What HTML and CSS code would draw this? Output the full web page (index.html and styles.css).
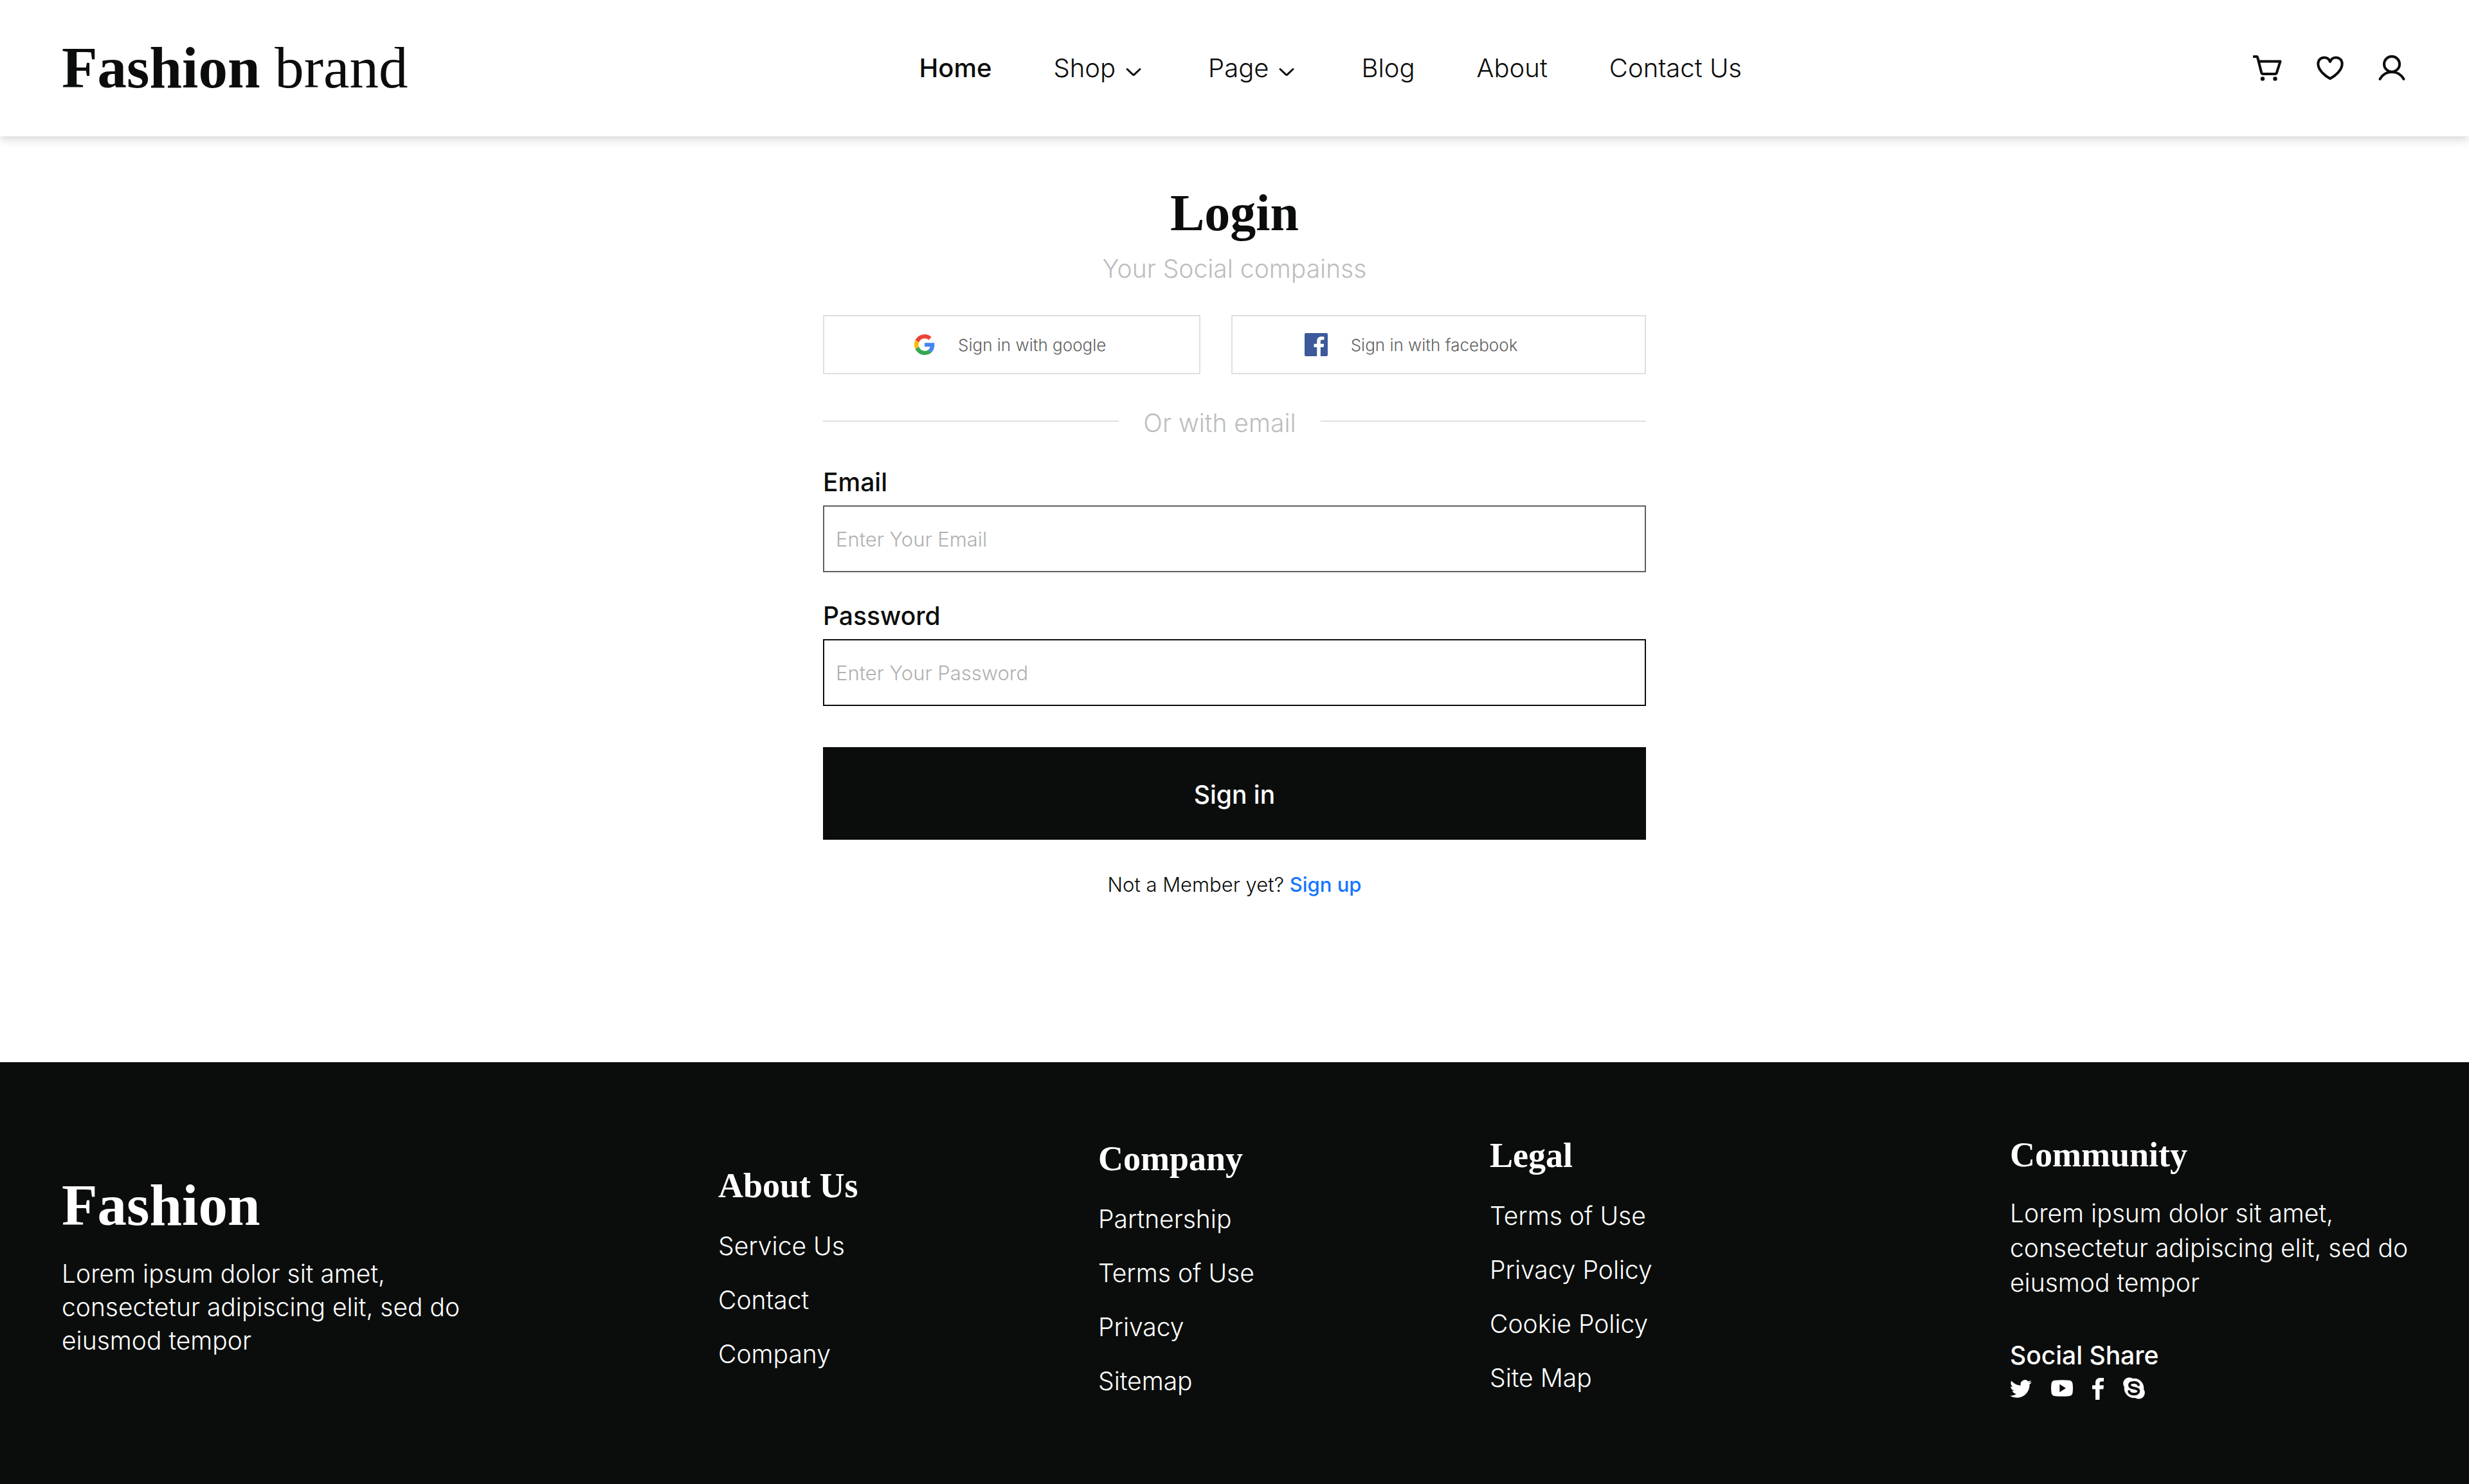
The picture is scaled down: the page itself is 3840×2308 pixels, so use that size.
FILE: index.html
```html
<!DOCTYPE html>
<html lang="en">
<head>
<meta charset="utf-8">
<meta name="viewport" content="width=device-width, initial-scale=1">
<title>Login – Fashion brand</title>
<link rel="stylesheet" href="styles.css">
</head>
<body>
<header class="site-header">
  <a class="logo" href="#"><strong>Fashion</strong> brand</a>
  <nav class="main-nav" aria-label="Main">
    <a class="nav-link nav-link-active" href="#">Home</a>
    <a class="nav-link" href="#">Shop
      <svg class="chevron" viewBox="0 0 40 40" aria-hidden="true"><path d="M10 21.500l8.800 8.400c.8.700 1.700.7 2.400 0L30 21.500"/></svg></a>
    <a class="nav-link" href="#">Page
      <svg class="chevron" viewBox="0 0 40 40" aria-hidden="true"><path d="M10 21.500l8.800 8.400c.8.700 1.700.7 2.400 0L30 21.500"/></svg></a>
    <a class="nav-link" href="#">Blog</a>
    <a class="nav-link" href="#">About</a>
    <a class="nav-link" href="#">Contact Us</a>
  </nav>
  <div class="header-tools">
    <button class="icon-button" type="button" aria-label="Cart">
      <svg class="line-icon" viewBox="0 0 48 48" aria-hidden="true"><path d="M1.500 6h4.200c.7 0 1.200.5 1.400 1.100L13.200 31c.3 1.200 1.200 2 2.500 2h18.600c1.300 0 2.200-.7 2.600-1.900L42.500 13.500H9"/><circle class="wheel" cx="15" cy="40.500" r="3.200"/><circle class="wheel" cx="34.500" cy="40.500" r="3.200"/></svg>
    </button>
    <button class="icon-button" type="button" aria-label="Wishlist">
      <svg class="line-icon" viewBox="0 0 48 48" aria-hidden="true"><path d="M24 40.300C16 36 5.300 27 5.300 17.300 5.300 11 10 7.500 14.800 7.500c4.200 0 7.700 2.500 9.200 6.500 1.500-4 5-6.500 9.200-6.500 4.800 0 9.500 3.500 9.500 9.800C42.700 27 32 36 24 40.300z"/></svg>
    </button>
    <button class="icon-button" type="button" aria-label="Account">
      <svg class="line-icon" viewBox="0 0 48 48" aria-hidden="true"><circle cx="24" cy="17.700" r="12"/><path d="M5.500 41C9.500 34 16 30 24 30s14.500 4 18.500 11"/></svg>
    </button>
  </div>
</header>

<main class="login">
  <h1 class="login-title">Login</h1>
  <p class="login-subtitle">Your Social compainss</p>

  <div class="social-buttons">
    <button class="social-button" type="button">
      <svg class="google-icon" viewBox="0 0 48 48" aria-hidden="true">
        <path fill="#EA4335" d="M24 9.500c3.540 0 6.710 1.220 9.210 3.600l6.850-6.850C35.900 2.380 30.470 0 24 0 14.620 0 6.510 5.380 2.560 13.220l7.980 6.190C12.430 13.720 17.740 9.500 24 9.500z"/>
        <path fill="#4285F4" d="M46.980 24.550c0-1.570-.15-3.090-.38-4.550H24v9.020h12.940c-.58 2.960-2.260 5.480-4.780 7.180l7.730 6c4.510-4.180 7.090-10.360 7.090-17.650z"/>
        <path fill="#FBBC05" d="M10.530 28.590c-.48-1.450-.76-2.990-.76-4.590s.27-3.140.76-4.590l-7.980-6.190C.92 16.460 0 20.120 0 24c0 3.880.92 7.540 2.560 10.780l7.970-6.190z"/>
        <path fill="#34A853" d="M24 48c6.480 0 11.930-2.130 15.890-5.810l-7.730-6c-2.150 1.450-4.920 2.300-8.160 2.300-6.260 0-11.570-4.220-13.470-9.910l-7.980 6.190C6.510 42.620 14.620 48 24 48z"/>
      </svg>
      Sign in with google
    </button>
    <button class="social-button social-button-facebook" type="button">
      <svg class="facebook-icon" viewBox="0 0 24 24" aria-hidden="true"><path d="M22.676 0H1.324C.593 0 0 .593 0 1.324v21.352C0 23.408.593 24 1.324 24h11.494v-9.294H9.689v-3.621h3.129V8.410c0-3.099 1.894-4.785 4.659-4.785 1.325 0 2.464.097 2.796.141v3.240h-1.921c-1.500 0-1.792.721-1.792 1.771v2.311h3.584l-.465 3.630H16.560V24h6.115c.733 0 1.325-.592 1.325-1.324V1.324C24 .593 23.408 0 22.676 0"/></svg>
      Sign in with facebook
    </button>
  </div>

  <p class="divider">Or with email</p>

  <form class="login-form" action="#">
    <label class="field-label" for="email">Email</label>
    <input class="field-input" id="email" type="email" placeholder="Enter Your Email">
    <label class="field-label field-label-next" for="password">Password</label>
    <input class="field-input field-input-dark" id="password" type="password" placeholder="Enter Your Password">
    <button class="submit-button" type="submit">Sign in</button>
  </form>

  <p class="signup">Not a Member yet? <a class="signup-link" href="#">Sign up</a></p>
</main>

<footer class="site-footer">
  <section class="footer-brand">
    <h2 class="footer-logo">Fashion</h2>
    <p class="brand-text">Lorem ipsum dolor sit amet, consectetur adipiscing elit, sed do eiusmod tempor</p>
  </section>
  <nav class="footer-column" aria-label="About Us">
    <h3 class="footer-heading">About Us</h3>
    <a class="footer-link" href="#">Service Us</a>
    <a class="footer-link" href="#">Contact</a>
    <a class="footer-link" href="#">Company</a>
  </nav>
  <nav class="footer-column" aria-label="Company">
    <h3 class="footer-heading">Company</h3>
    <a class="footer-link" href="#">Partnership</a>
    <a class="footer-link" href="#">Terms of Use</a>
    <a class="footer-link" href="#">Privacy</a>
    <a class="footer-link" href="#">Sitemap</a>
  </nav>
  <nav class="footer-column footer-column-legal" aria-label="Legal">
    <h3 class="footer-heading">Legal</h3>
    <a class="footer-link" href="#">Terms of Use</a>
    <a class="footer-link" href="#">Privacy Policy</a>
    <a class="footer-link" href="#">Cookie Policy</a>
    <a class="footer-link" href="#">Site Map</a>
  </nav>
  <section class="footer-community">
    <h3 class="footer-heading">Community</h3>
    <p class="community-text">Lorem ipsum dolor sit amet, consectetur adipiscing elit, sed do eiusmod tempor</p>
    <h4 class="share-title">Social Share</h4>
    <div class="share-links">
      <a class="share-link" href="#" aria-label="Twitter"><svg width="34" height="34" viewBox="0 0 24 24" aria-hidden="true"><path d="M23.953 4.570a10 10 0 01-2.825.775 4.958 4.958 0 002.163-2.723c-.951.555-2.005.959-3.127 1.184a4.920 4.920 0 00-8.384 4.482C7.690 8.095 4.067 6.130 1.640 3.162a4.822 4.822 0 00-.666 2.475c0 1.710.870 3.213 2.188 4.096a4.904 4.904 0 01-2.228-.616v.060a4.923 4.923 0 003.946 4.827 4.996 4.996 0 01-2.212.085 4.936 4.936 0 004.604 3.417 9.867 9.867 0 01-6.102 2.105c-.390 0-.779-.023-1.170-.067a13.995 13.995 0 007.557 2.209c9.053 0 13.998-7.496 13.998-13.985 0-.210 0-.420-.015-.630A9.935 9.935 0 0024 4.590z"/></svg></a>
      <a class="share-link" href="#" aria-label="YouTube"><svg width="34" height="28" viewBox="0 0 34 28" aria-hidden="true"><path fill-rule="evenodd" d="M6 .8C13 0 21 0 28 .8c3.500.4 5.200 2.200 5.500 5.200.6 4.700.6 9.300 0 14-.3 3-2 4.800-5.500 5.200-7 .8-15 .8-22 0C2.500 24.800.8 23 .5 20c-.6-4.700-.6-9.300 0-14C.8 3 2.500 1.200 6 .8zM13.300 6.800v12.400L23 13z"/></svg></a>
      <a class="share-link" href="#" aria-label="Facebook"><svg width="18" height="34" viewBox="0 0 18 34" aria-hidden="true"><path d="M5 34V17.500H0v-6h5v-4C5 2.500 8 0 12.500 0H18v5.500h-3.500c-2.200 0-3 1-3 3v3H18l-.7 6h-5.800V34z"/></svg></a>
      <a class="share-link" href="#" aria-label="Skype"><svg width="34" height="36" viewBox="0 0 34 36" aria-hidden="true"><circle cx="17" cy="17" r="15.300"/><circle cx="9.700" cy="9.700" r="9.500"/><circle cx="24.300" cy="24.300" r="9.500"/><path class="skype-curve" d="M24 11.800C23 9.200 20.500 8 17 8c-4 0-7 1.500-7 4.300 0 3.200 3.500 3.800 7 4.600 3.700.8 7.300 1.500 7.300 4.700 0 3-3.100 4.700-7.300 4.700-4 0-7-1.500-7.700-4.300"/></svg></a>
    </div>
  </section>
</footer>
</body>
</html>
```
FILE: styles.css
```css
:root {
  --ink: #0b0d0c;
  --muted: #bdbdbd;
  --line: #e0e0e0;
  --serif: "Liberation Serif", "Times New Roman", serif;
  --sans: Inter, "Liberation Sans", sans-serif;
}

* {
  box-sizing: border-box;
}

body {
  display: flex;
  flex-direction: column;
  min-height: 100vh;
  margin: 0;
  background: #fff;
  color: var(--ink);
  font-family: var(--sans);
  font-size: 39px;
  font-weight: 300;
  line-height: 48px;
}

h1, h2, h3, h4, p {
  margin: 0;
}

a {
  color: inherit;
  text-decoration: none;
}

button {
  font-family: inherit;
  cursor: pointer;
}

svg {
  display: block;
}

/* Header */

.site-header {
  display: flex;
  align-items: center;
  justify-content: space-between;
  padding: 56px 96px;
  background: #fff;
  box-shadow: 0 4px 14px rgba(10, 10, 20, 0.18);
}

.logo {
  font-family: var(--serif);
  font-size: 91px;
  font-weight: 400;
  line-height: 100px;
}

.main-nav {
  display: flex;
  gap: 96px;
  font-size: 40px;
}

.nav-link {
  display: flex;
  align-items: center;
  gap: 8px;
}

.nav-link-active {
  font-weight: 500;
}

.chevron {
  width: 40px;
  height: 40px;
  fill: none;
  stroke: currentColor;
  stroke-width: 3;
  stroke-linecap: round;
}

.header-tools {
  display: flex;
  gap: 48px;
}

.icon-button {
  padding: 0;
  border: 0;
  background: none;
  color: inherit;
}

.line-icon {
  width: 48px;
  height: 48px;
  fill: none;
  stroke: currentColor;
  stroke-width: 4;
  stroke-linecap: round;
  stroke-linejoin: round;
}

.wheel {
  fill: currentColor;
  stroke: none;
}

/* Login */

.login {
  width: calc(100% / 3);
  min-width: 1200px;
  margin: 0 auto;
  padding: 72px 0 256px;
}

.login-title {
  font-family: var(--serif);
  font-size: 80px;
  line-height: 94px;
  text-align: center;
}

.login-subtitle {
  margin-top: 16px;
  color: var(--muted);
  text-align: center;
}

.social-buttons {
  display: grid;
  grid-template-columns: 10fr 11fr;
  gap: 48px;
  margin-top: 48px;
}

.social-button {
  display: flex;
  align-items: center;
  gap: 36px;
  height: 92px;
  padding: 0 0 0 140px;
  border: 2px solid var(--line);
  background: #fff;
  color: #5f5f5f;
  font-size: 26px;
  font-weight: 300;
}

.social-button-facebook {
  padding-left: 112px;
}

.google-icon {
  width: 32px;
  height: 32px;
}

.facebook-icon {
  width: 36px;
  height: 36px;
  fill: #3c5a99;
}

.divider {
  display: flex;
  align-items: center;
  gap: 38px;
  margin-top: 52px;
  color: var(--muted);
}

.divider::before,
.divider::after {
  content: "";
  flex: 10;
  height: 2px;
  margin-bottom: 6px;
  background: var(--line);
}

.divider::after {
  flex: 11;
}

.login-form {
  display: flex;
  flex-direction: column;
  margin-top: 44px;
}

.field-label {
  font-weight: 500;
}

.field-label-next {
  margin-top: 44px;
}

.field-input {
  height: 104px;
  margin-top: 12px;
  padding: 0 18px;
  border: 2px solid #5f5f5f;
  border-radius: 0;
  background: #fff;
  color: var(--ink);
  font-family: inherit;
  font-size: 31px;
  font-weight: 300;
}

.field-input-dark {
  border-color: var(--ink);
}

.field-input::placeholder {
  color: #b0b0b0;
  opacity: 1;
}

.submit-button {
  height: 144px;
  margin-top: 64px;
  padding: 2px 0 0;
  border: 0;
  background: var(--ink);
  color: #fff;
  font-size: 39px;
  font-weight: 500;
}

.signup {
  margin-top: 50px;
  font-size: 31px;
  line-height: 40px;
  text-align: center;
}

.signup-link {
  color: #1476ff;
  font-weight: 500;
}

/* Footer */

.site-footer {
  display: grid;
  flex-grow: 1;
  grid-template-columns: 1021fr 591fr 609fr 809fr 650fr;
  align-content: start;
  align-items: center;
  padding: 114px 64px 126px 96px;
  background: var(--ink);
  color: #fff;
}

.footer-brand {
  padding-bottom: 6px;
}

.footer-logo {
  font-family: var(--serif);
  font-size: 91px;
  line-height: 96px;
}

.brand-text {
  max-width: 640px;
  margin-top: 32px;
  line-height: 52px;
}

.footer-column {
  display: flex;
  flex-direction: column;
  align-items: flex-start;
  gap: 36px;
}

.footer-column-legal {
  padding-bottom: 10px;
}

.footer-heading {
  margin-bottom: 4px;
  font-family: var(--serif);
  font-size: 54px;
  line-height: 60px;
}

.community-text {
  margin-top: 34px;
  line-height: 54px;
}

.share-title {
  margin-top: 62px;
  font-size: 39px;
  font-weight: 500;
}

.share-links {
  display: flex;
  align-items: center;
  gap: 30px;
  margin-top: 10px;
}

.share-link svg {
  fill: currentColor;
}

.share-link .skype-curve {
  fill: none;
  stroke: var(--ink);
  stroke-width: 4;
  stroke-linecap: round;
}
```
